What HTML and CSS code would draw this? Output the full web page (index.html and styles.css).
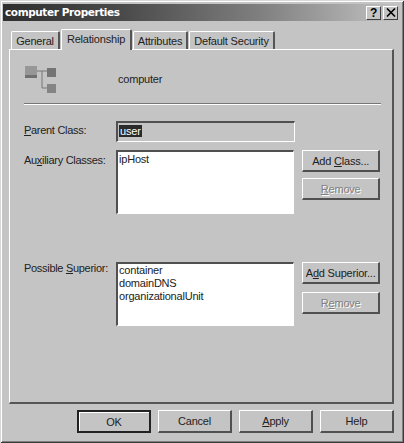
FILE: index.html

```html
<!DOCTYPE html>
<html lang="en">
<head>
	<meta charset="UTF-8">
	<title>computer Properties</title>
	<link rel="stylesheet" href="styles.css">
</head>
<body>
	<div class="window">
		<div class="titlebar">
			<span class="title">computer Properties</span>
			<div class="caption_btns">
				<div class="caption_btn">?</div>
				<div class="caption_btn">
					<svg width="10" height="9" viewBox="0 0 10 9"><path d="M1 0.5 L9 8.5 M9 0.5 L1 8.5" stroke="#000" stroke-width="1.6" fill="none"/></svg>
				</div>
			</div>
		</div>

		<div class="tabs">
			<div class="tab tab_general">General</div>
			<div class="tab tab_active">Relationship</div>
			<div class="tab tab_attrs">Attributes</div>
			<div class="tab tab_security">Default Security</div>
		</div>

		<div class="panel">
			<div class="head">
				<svg class="class_icon" width="34" height="30" viewBox="0 0 34 30">
					<path d="M13 7 H24 M18 7 V24 H24" stroke="#777" stroke-width="1" fill="none"/>
					<rect x="1" y="2" width="12" height="12" fill="#979797"/>
					<rect x="1" y="11" width="12" height="3" fill="#707070"/>
					<rect x="23" y="4" width="9" height="9" fill="#747474"/>
					<rect x="23" y="20" width="9" height="9" fill="#848484"/>
				</svg>
				<span class="head_name">computer</span>
			</div>
			<div class="sep"></div>

			<div class="row row_parent">
				<label class="lbl"><u>P</u>arent Class:</label>
				<div class="field field_readonly"><span class="selected">user</span></div>
			</div>

			<div class="row row_aux">
				<label class="lbl">Au<u>x</u>iliary Classes:</label>
				<div class="field field_list">ipHost</div>
				<div class="side">
					<div class="btn">Add <u>C</u>lass...</div>
					<div class="btn btn_off"><u>R</u>emove</div>
				</div>
			</div>

			<div class="row row_superior">
				<label class="lbl">Possible <u>S</u>uperior:</label>
				<div class="field field_list">container<br>domainDNS<br>organizationalUnit</div>
				<div class="side side_wide">
					<div class="btn">A<u>d</u>d Superior...</div>
					<div class="btn btn_off">R<u>e</u>move</div>
				</div>
			</div>
		</div>

		<div class="footer">
			<div class="btn btn_foot btn_default">OK</div>
			<div class="btn btn_foot">Cancel</div>
			<div class="btn btn_foot"><u>A</u>pply</div>
			<div class="btn btn_foot">Help</div>
		</div>
	</div>
</body>
</html>
```

FILE: styles.css

```css
*{
	margin:0;
	padding:0;
	box-sizing:border-box;
}

body{
	background-color:#c0c0c0;
	font-family:'Liberation Sans',Arial,sans-serif;
	font-size:11px;
	letter-spacing:-0.2px;
	color:#222;
}

u{
	text-decoration:underline;
	text-underline-offset:1px;
}

.window{
	width:404px;
	height:443px;
	padding:4px 3px 0 3px;
	background-color:#c4c4c4;
	box-shadow:inset 1px 1px 0 #d8d8d8,inset -1px -1px 0 #3a3a3a,inset 2px 2px 0 #fff,inset -2px -2px 0 #808080;
	overflow:hidden;
}

.titlebar{
	height:17px;
	padding:0 3px 0 2px;
	display:flex;
	align-items:center;
	justify-content:space-between;
	background:linear-gradient(to right,#2e2e2e,#4a4a4a 30%,#808080 65%,#c4c4c4);
}

.title{
	padding-bottom:2px;
	font-family:'DejaVu Sans',sans-serif;
	font-size:10.5px;
	font-weight:bold;
	letter-spacing:-0.4px;
	color:#fff;
}

.caption_btns{
	display:flex;
	gap:2px;
}

.caption_btn{
	width:15px;
	height:14px;
	display:flex;
	align-items:center;
	justify-content:center;
	background-color:#c4c4c4;
	border:1px solid;
	border-color:#fff #404040 #404040 #fff;
	font-weight:bold;
	font-size:12px;
	color:#000;
}

.tabs{
	height:28px;
	padding:8px 0 0 8px;
	display:flex;
	align-items:flex-end;
}

.tab{
	height:18px;
	padding-top:3px;
	text-align:center;
	background-color:#c4c4c4;
	border:solid #fff;
	border-width:1px 0 0 1px;
	border-right:2px solid #555;
	border-radius:2px 2px 0 0;
	white-space:nowrap;
}

.tab_general{
	width:49px;
	margin-right:1px;
}

.tab_active{
	width:71px;
	height:21px;
	margin-right:1px;
	margin-bottom:-1px;
	position:relative;
	z-index:1;
}

.tab_attrs{
	width:55px;
	margin-right:1px;
}

.tab_security{
	width:86px;
}

.panel{
	width:385px;
	height:355px;
	margin-left:6px;
	padding:0 12px 0 14px;
	border:solid;
	border-color:#fff #555 #555 #fff;
	border-width:1px 2px 2px 1px;
}

.head{
	height:53px;
	display:flex;
	align-items:center;
}

.class_icon{
	margin-top:4px;
}

.head_name{
	margin-top:5px;
	margin-left:60px;
}

.sep{
	height:2px;
	width:357px;
	background-color:#777;
	border-bottom:1px solid #fff;
}

.row{
	display:flex;
	align-items:flex-start;
}

.lbl{
	width:92px;
	flex-shrink:0;
	letter-spacing:-0.3px;
	white-space:nowrap;
}

.field{
	width:179px;
	border:solid;
	border-color:#505050 #fff #fff #505050;
	border-width:2px 1px 1px 2px;
	padding:2px 0 0 1px;
	line-height:13px;
}

.row_parent{
	margin-top:16px;
	height:21px;
}

.row_parent .lbl{
	padding-top:3px;
}

.field_readonly{
	height:21px;
}

.selected{
	background-color:#2a2a2a;
	color:#fff;
	padding:0 1px;
}

.row_aux{
	margin-top:8px;
}

.row_aux .lbl{
	padding-top:4px;
}

.row_superior{
	margin-top:48px;
}

.field_list{
	height:64px;
	padding-top:1px;
	background-color:#fff;
}

.row_superior .field_list{
	padding-top:0;
}

.side{
	width:78px;
	margin-left:8px;
	display:flex;
	flex-direction:column;
	gap:6px;
}

.side_wide{
	gap:8px;
}

.btn{
	height:22px;
	display:flex;
	align-items:center;
	justify-content:center;
	white-space:pre;
	background-color:#c4c4c4;
	border:solid;
	border-color:#fff #505050 #505050 #fff;
	border-width:1px 2px 2px 1px;
}

.btn_off{
	color:#808080;
	text-shadow:1px 1px 0 #fff;
}

.footer{
	width:385px;
	margin:6px 0 0 6px;
	display:flex;
	justify-content:flex-end;
	gap:7px;
}

.btn_foot{
	width:74px;
	height:23px;
}

.btn_default{
	border:2px solid #222;
	box-shadow:inset 1px 1px 0 #fff;
}
```
